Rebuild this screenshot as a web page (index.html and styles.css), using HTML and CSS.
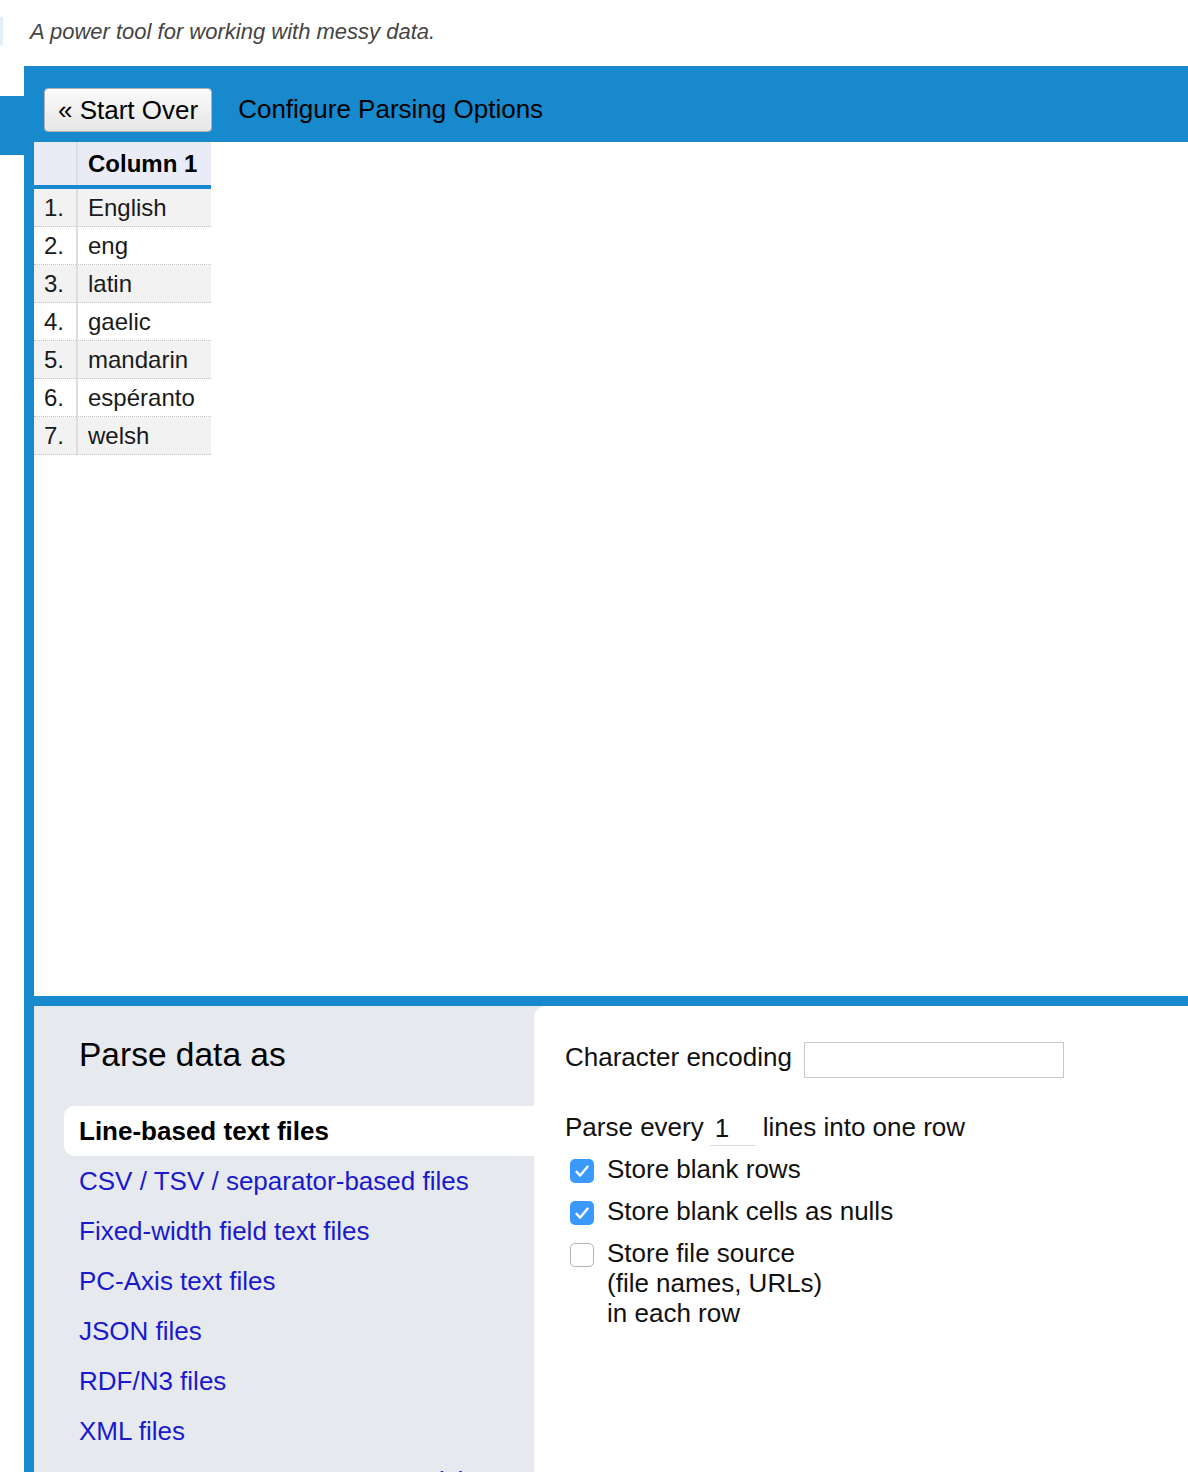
FILE: index.html
```html
<!DOCTYPE html>
<html>
<head>
<meta charset="utf-8">
<title>Configure Parsing Options</title>
<link rel="stylesheet" href="styles.css">
</head>
<body>
<div class="top">
  <span class="edge"></span>
  <p class="tagline">A power tool for working with messy data.</p>
</div>
<div class="page">
  <div class="side"><div class="side-tab"></div></div>
  <div class="app">
    <div class="toolbar">
      <button class="btn">« Start Over</button>
      <h1 class="title">Configure Parsing Options</h1>
    </div>
    <div class="data">
      <table class="grid">
        <thead>
          <tr><th class="idx"></th><th class="val">Column 1</th></tr>
        </thead>
        <tbody>
          <tr class="odd"><td class="idx">1.</td><td class="val">English</td></tr>
          <tr><td class="idx">2.</td><td class="val">eng</td></tr>
          <tr class="odd"><td class="idx">3.</td><td class="val">latin</td></tr>
          <tr><td class="idx">4.</td><td class="val">gaelic</td></tr>
          <tr class="odd"><td class="idx">5.</td><td class="val">mandarin</td></tr>
          <tr><td class="idx">6.</td><td class="val">espéranto</td></tr>
          <tr class="odd"><td class="idx">7.</td><td class="val">welsh</td></tr>
        </tbody>
      </table>
    </div>
    <div class="options">
      <div class="formats">
        <h2 class="formats-title">Parse data as</h2>
        <ul class="format-list">
          <li class="sel">Line-based text files</li>
          <li><a href="#">CSV / TSV / separator-based files</a></li>
          <li><a href="#">Fixed-width field text files</a></li>
          <li><a href="#">PC-Axis text files</a></li>
          <li><a href="#">JSON files</a></li>
          <li><a href="#">RDF/N3 files</a></li>
          <li><a href="#">XML files</a></li>
          <li><a href="#">Open Document Format spreadsheets (.ods)</a></li>
          <li><a href="#">Excel files</a></li>
        </ul>
      </div>
      <div class="settings">
        <div class="enc-row">
          <span class="lbl">Character encoding</span>
          <input class="enc" type="text" value="">
        </div>
        <div class="every-row">
          <span class="lbl">Parse every</span>
          <input class="lines" type="text" value="1">
          <span class="lbl">lines into one row</span>
        </div>
        <div class="check-row first">
          <span class="cb on"><svg viewBox="0 0 24 24" width="24" height="24"><path d="M6.5 12.8 L10.2 16.6 L17.6 7.6" fill="none" stroke="#fff" stroke-width="2.3" stroke-linecap="round" stroke-linejoin="round"/></svg></span>
          <span class="lbl">Store blank rows</span>
        </div>
        <div class="check-row">
          <span class="cb on"><svg viewBox="0 0 24 24" width="24" height="24"><path d="M6.5 12.8 L10.2 16.6 L17.6 7.6" fill="none" stroke="#fff" stroke-width="2.3" stroke-linecap="round" stroke-linejoin="round"/></svg></span>
          <span class="lbl">Store blank cells as nulls</span>
        </div>
        <div class="check-row">
          <span class="cb off"></span>
          <span class="lbl">Store file source<br>(file names, URLs)<br>in each row</span>
        </div>
      </div>
    </div>
  </div>
</div>
</body>
</html>
```
FILE: styles.css
```css
html, body {
  margin: 0;
  padding: 0;
  overflow: hidden;
  background: #fff;
}
body {
  font-family: "Liberation Sans", Arial, sans-serif;
  color: #000;
  width: 1188px;
  height: 1472px;
}
.top {
  height: 66px;
  display: flex;
  align-items: flex-start;
}
.edge {
  width: 3px;
  height: 28px;
  margin-top: 17px;
  background: #e4eef8;
}
.tagline {
  margin: 0 0 0 27px;
  padding-top: 20px;
  font-size: 22px;
  line-height: 24px;
  font-style: italic;
  color: #444;
}
.page {
  display: flex;
  height: 1406px;
  overflow: hidden;
}
.side {
  width: 24px;
  flex: none;
}
.side-tab {
  margin-top: 30px;
  height: 59px;
  background: #1789cc;
}
.app {
  flex: 1;
  background: #1789cc;
  padding-left: 10px;
  display: flex;
  flex-direction: column;
}
.toolbar {
  height: 76px;
  display: flex;
  align-items: flex-start;
  padding-left: 10px;
  padding-top: 22px;
  box-sizing: border-box;
}
.btn {
  height: 44px;
  box-sizing: border-box;
  margin: 0;
  padding: 0 13px;
  font-family: "Liberation Sans", Arial, sans-serif;
  font-size: 26px;
  line-height: 42px;
  color: #000;
  background: linear-gradient(#fbfbfb, #e6e6e6);
  border: 1px solid #b4b4b4;
  border-radius: 4px;
}
.title {
  margin: 0 0 0 26px;
  font-size: 26px;
  font-weight: normal;
  line-height: 42px;
  color: #000;
}
.data {
  height: 854px;
  background: #fff;
}
.grid {
  border-collapse: collapse;
  width: 177px;
  font-size: 24px;
  color: #1a1a1a;
}
.grid th {
  height: 43px;
  padding: 0;
  background: #e9ecf6;
  border-bottom: 4px solid #1789cc;
  line-height: 43px;
  text-align: left;
  font-weight: bold;
  color: #000;
}
.grid td {
  height: 37px;
  padding: 0;
  line-height: 37px;
  border-bottom: 1px dotted #c4c4c4;
}
.grid .idx {
  width: 43px;
  text-align: right;
  padding-right: 12px;
  box-sizing: border-box;
  border-right: 2px solid #dedede;
}
.grid .val {
  padding-left: 10px;
  white-space: nowrap;
}
.grid tr.odd td {
  background: #f2f2f2;
}
.options {
  margin-top: 10px;
  flex: 1;
  display: flex;
  background: #e6e9ed;
  overflow: hidden;
}
.formats {
  width: 500px;
  flex: none;
  padding: 29px 0 0 30px;
  box-sizing: border-box;
}
.formats-title {
  margin: 0 0 31px;
  padding-left: 15px;
  font-size: 33.5px;
  line-height: 40px;
  font-weight: normal;
  color: #000;
}
.format-list {
  list-style: none;
  margin: 0;
  padding: 0;
}
.format-list li {
  height: 50px;
  line-height: 50px;
  padding-left: 15px;
  font-size: 26px;
  white-space: nowrap;
}
.format-list li.sel {
  background: #fff;
  border-radius: 10px 0 0 10px;
  font-weight: bold;
  color: #000;
}
.format-list a {
  color: #1a1acc;
  text-decoration: none;
}
.settings {
  flex: 1;
  background: #fff;
  border-top-left-radius: 12px;
  padding: 36px 0 0 31px;
  font-size: 26px;
  color: #111;
}
.lbl {
  line-height: 30px;
}
.enc-row {
  display: flex;
  align-items: flex-start;
  gap: 12px;
}
.enc {
  width: 260px;
  height: 36px;
  box-sizing: border-box;
  margin: 0;
  border: 1px solid #c8c8c8;
  border-radius: 0;
  background: #fff;
}
.every-row {
  margin-top: 34px;
  display: flex;
  align-items: flex-start;
}
.lines {
  width: 46px;
  height: 34px;
  box-sizing: border-box;
  margin: 0 7px 0 6px;
  padding: 0 5px;
  border: none;
  border-bottom: 1px solid #dadada;
  font-family: "Liberation Sans", Arial, sans-serif;
  font-size: 26px;
  color: #111;
  background: #fff;
  outline: none;
}
.check-row {
  margin-top: 12px;
  display: flex;
  align-items: flex-start;
  gap: 13px;
  padding-left: 5px;
}
.check-row.first {
  margin-top: 8px;
}
.cb {
  width: 24px;
  height: 24px;
  margin-top: 5px;
  box-sizing: border-box;
  border-radius: 5px;
  flex: none;
  display: block;
}
.cb svg {
  display: block;
}
.cb.on {
  background: #3b99fc;
}
.cb.off {
  background: #fff;
  border: 1px solid #b4b4b4;
}
```
